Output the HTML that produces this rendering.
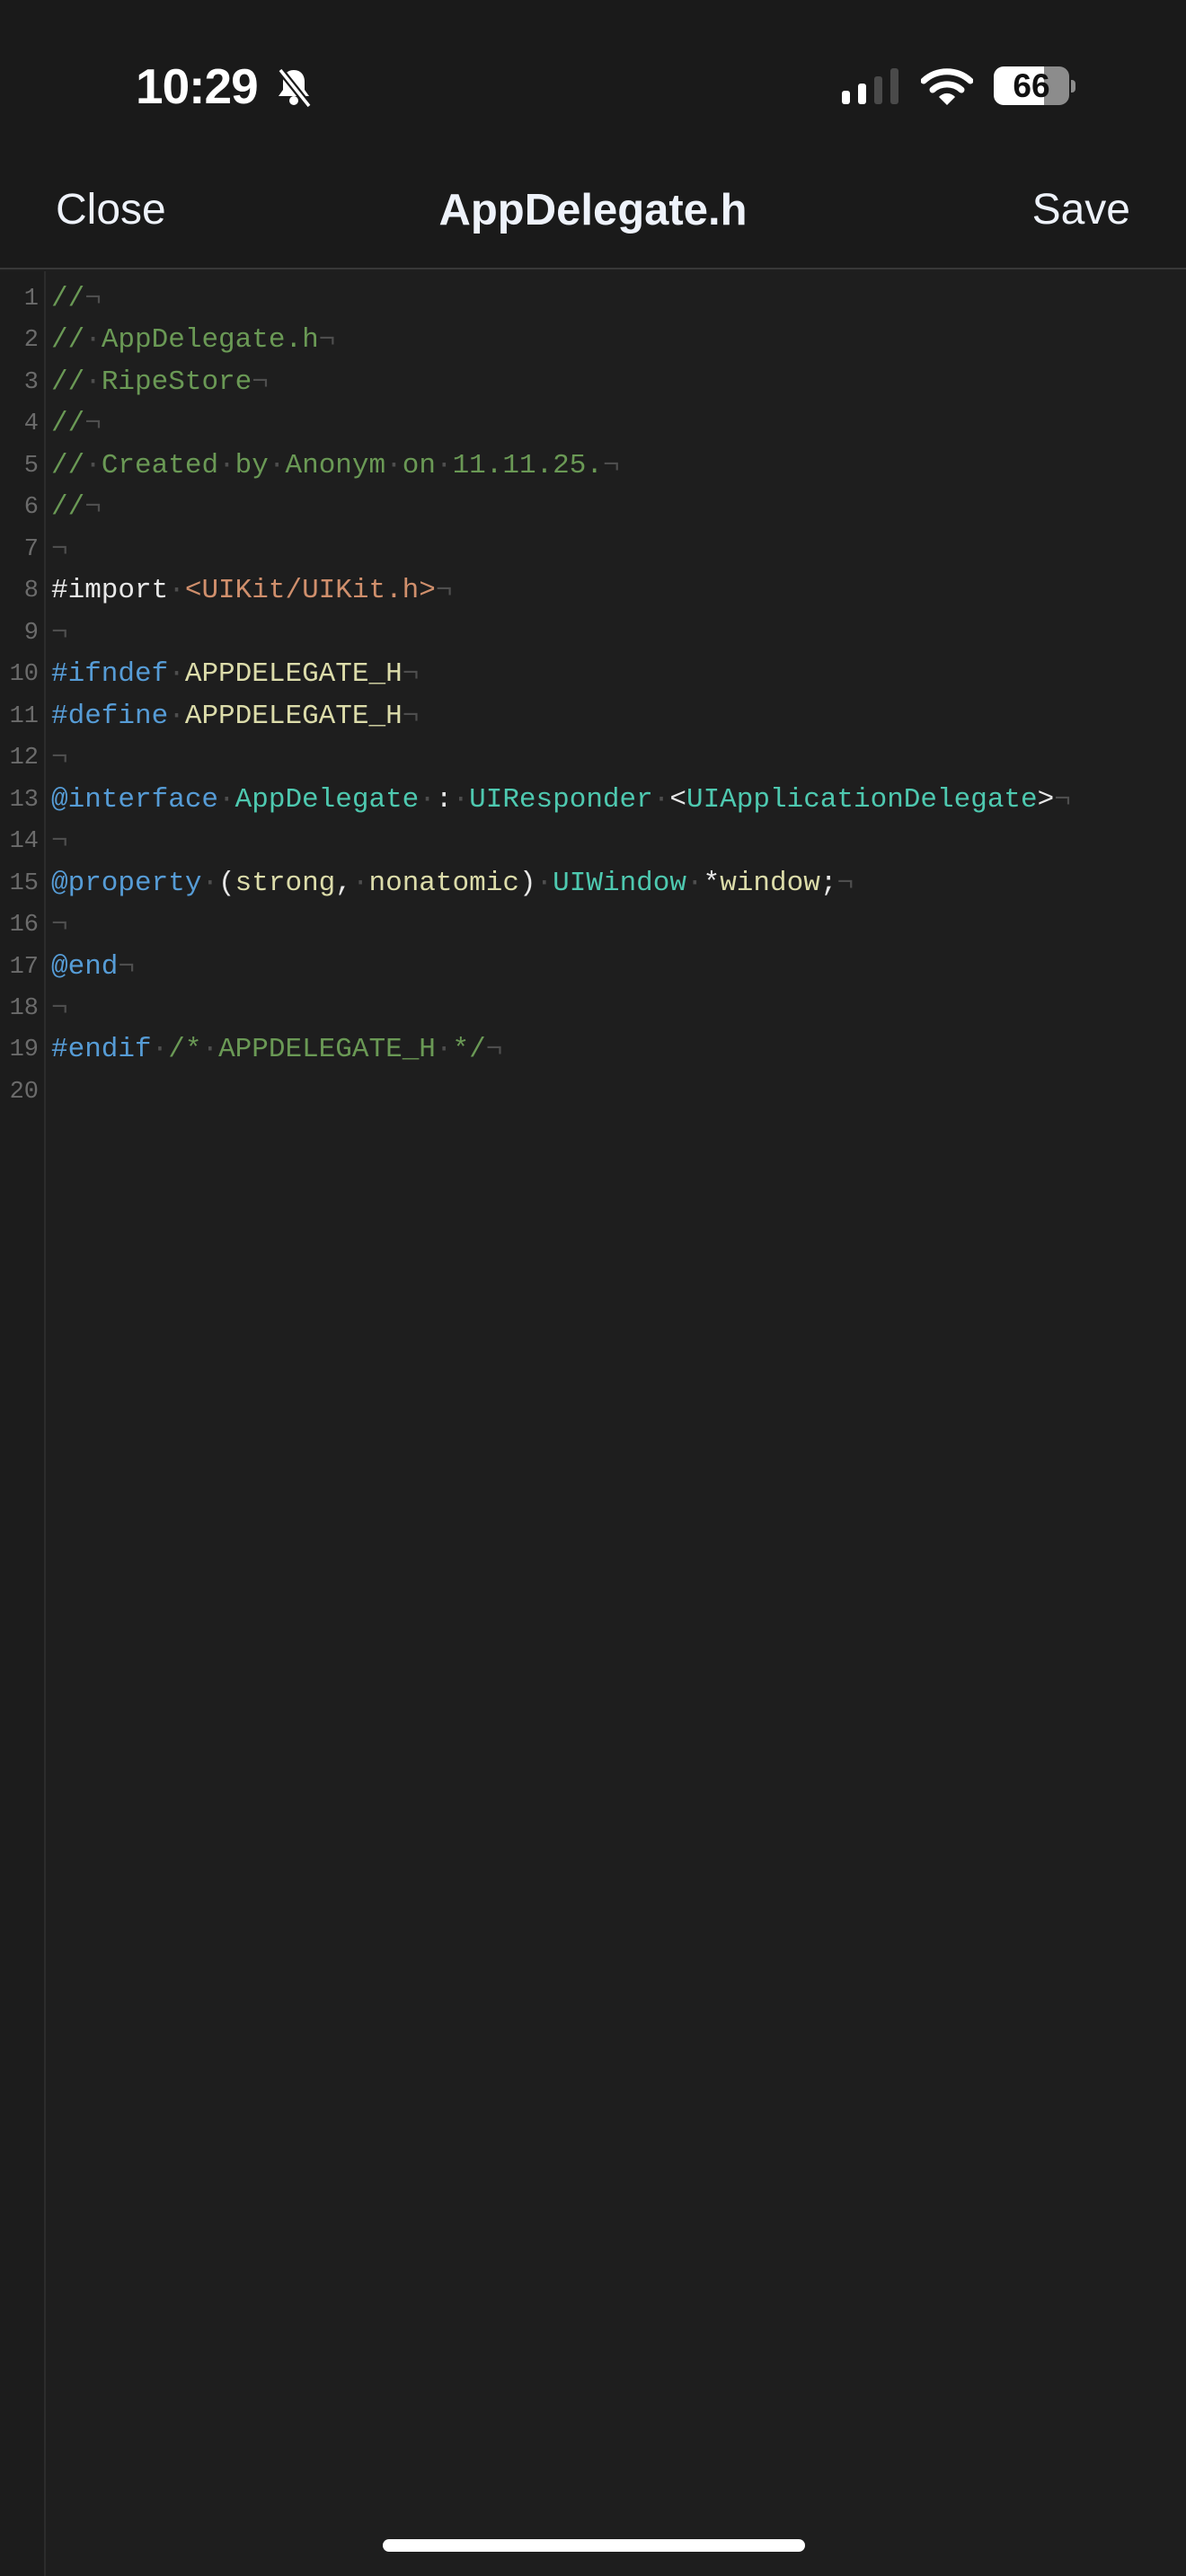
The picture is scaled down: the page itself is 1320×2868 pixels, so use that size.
<!DOCTYPE html>
<html><head><meta charset="utf-8"><style>
*{margin:0;padding:0;box-sizing:border-box}
html,body{width:1320px;height:2868px;background:#1e1e1e;overflow:hidden}
body{position:relative;font-family:"Liberation Sans",sans-serif}
#top{position:absolute;left:0;top:0;width:1320px;height:300px;background:#1a1a1a;border-bottom:2px solid #383838}
.time{position:absolute;left:151px;top:64px;font-size:55px;font-weight:bold;color:#fff;letter-spacing:-1px}
.nav{position:absolute;top:206px;font-size:48px;color:#eef2fa}
#gut{position:absolute;left:0;top:302px;width:51px;height:2566px;border-right:2px solid #2c2c2c;background:#1c1c1c}
.code{position:absolute;left:0;top:310px;font-family:"Liberation Mono",monospace;font-size:31px;white-space:pre}
.code div{height:46.47px;line-height:46.47px;overflow:visible}
.ln{display:inline-block;width:43px;text-align:right;color:#6b6b6b;font-size:27px;margin-right:14px;line-height:46.47px;vertical-align:top}
.c{color:#6a9955}.d{color:#4e4e4e}.w{color:#e8e8e8}.o{color:#d08f6c}.b{color:#569cd6}.y{color:#dcdcaa}.t{color:#4ec9b0}
</style></head><body>
<div id="top">
<div class="time">10:29</div>
<svg style="position:absolute;left:304px;top:74px" width="46" height="46" viewBox="0 0 46 46"><path d="M23 4c-8 0-12 6-12 13v9l-5 7h34l-5-7v-9c0-7-4-13-12-13z" fill="#fff"/><circle cx="23" cy="38" r="5" fill="#fff"/><path d="M8 4L40 44" stroke="#1a1a1a" stroke-width="8"/><path d="M8 4L40 44" stroke="#fff" stroke-width="3.5"/></svg>
<div style="position:absolute;left:937px;top:101px;width:9px;height:15px;border-radius:3px;background:#fff"></div>
<div style="position:absolute;left:955px;top:93px;width:9px;height:23px;border-radius:3px;background:#fff"></div>
<div style="position:absolute;left:973px;top:85px;width:9px;height:31px;border-radius:3px;background:#4a4a4a"></div>
<div style="position:absolute;left:991px;top:76px;width:9px;height:40px;border-radius:3px;background:#4a4a4a"></div>
<svg style="position:absolute;left:1025px;top:75px" width="58" height="42" viewBox="0 0 58 42"><path d="M3 15A38 38 0 0 1 55 15" stroke="#fff" stroke-width="7" fill="none" stroke-linecap="round"/><path d="M13 25A24 24 0 0 1 45 25" stroke="#fff" stroke-width="7" fill="none" stroke-linecap="round"/><path d="M20 33L29 42L38 33A12 12 0 0 0 20 33z" fill="#fff"/></svg>
<div style="position:absolute;left:1106px;top:74px;width:84px;height:43px;border-radius:11px;background:linear-gradient(90deg,#fff 0 56px,#8c8c8c 56px);overflow:hidden;text-align:center;font-weight:bold;font-size:37px;line-height:43px;color:#111">66</div>
<div style="position:absolute;left:1192px;top:89px;width:5px;height:14px;border-radius:0 4px 4px 0;background:#8c8c8c"></div>
<div class="nav" style="left:62px">Close</div>
<div class="nav" style="left:0;width:1320px;text-align:center;font-weight:bold;font-size:49px">AppDelegate.h</div>
<div class="nav" style="right:62px">Save</div>
</div>
<div id="gut"></div>
<div class="code"><div><span class="ln">1</span><span class="c">//</span><span class="d">¬</span></div><div><span class="ln">2</span><span class="c">//</span><span class="d">·</span><span class="c">AppDelegate.h</span><span class="d">¬</span></div><div><span class="ln">3</span><span class="c">//</span><span class="d">·</span><span class="c">RipeStore</span><span class="d">¬</span></div><div><span class="ln">4</span><span class="c">//</span><span class="d">¬</span></div><div><span class="ln">5</span><span class="c">//</span><span class="d">·</span><span class="c">Created</span><span class="d">·</span><span class="c">by</span><span class="d">·</span><span class="c">Anonym</span><span class="d">·</span><span class="c">on</span><span class="d">·</span><span class="c">11.11.25.</span><span class="d">¬</span></div><div><span class="ln">6</span><span class="c">//</span><span class="d">¬</span></div><div><span class="ln">7</span><span class="d">¬</span></div><div><span class="ln">8</span><span class="w">#import</span><span class="d">·</span><span class="o">&lt;UIKit/UIKit.h&gt;</span><span class="d">¬</span></div><div><span class="ln">9</span><span class="d">¬</span></div><div><span class="ln">10</span><span class="b">#ifndef</span><span class="d">·</span><span class="y">APPDELEGATE_H</span><span class="d">¬</span></div><div><span class="ln">11</span><span class="b">#define</span><span class="d">·</span><span class="y">APPDELEGATE_H</span><span class="d">¬</span></div><div><span class="ln">12</span><span class="d">¬</span></div><div><span class="ln">13</span><span class="b">@interface</span><span class="d">·</span><span class="t">AppDelegate</span><span class="d">·</span><span class="w">:</span><span class="d">·</span><span class="t">UIResponder</span><span class="d">·</span><span class="w">&lt;</span><span class="t">UIApplicationDelegate</span><span class="w">&gt;</span><span class="d">¬</span></div><div><span class="ln">14</span><span class="d">¬</span></div><div><span class="ln">15</span><span class="b">@property</span><span class="d">·</span><span class="w">(</span><span class="y">strong</span><span class="w">,</span><span class="d">·</span><span class="y">nonatomic</span><span class="w">)</span><span class="d">·</span><span class="t">UIWindow</span><span class="d">·</span><span class="w">*</span><span class="y">window</span><span class="w">;</span><span class="d">¬</span></div><div><span class="ln">16</span><span class="d">¬</span></div><div><span class="ln">17</span><span class="b">@end</span><span class="d">¬</span></div><div><span class="ln">18</span><span class="d">¬</span></div><div><span class="ln">19</span><span class="b">#endif</span><span class="d">·</span><span class="c">/*</span><span class="d">·</span><span class="c">APPDELEGATE_H</span><span class="d">·</span><span class="c">*/</span><span class="d">¬</span></div><div><span class="ln">20</span></div></div>
<div style="position:absolute;left:426px;top:2827px;width:470px;height:14px;border-radius:7px;background:#fff"></div>
</body></html>
